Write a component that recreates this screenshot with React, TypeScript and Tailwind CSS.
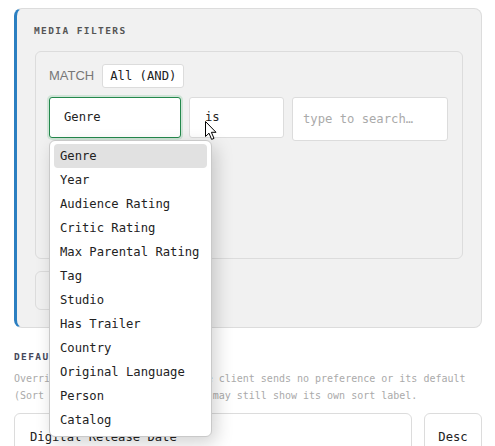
const fields = [
  'Genre',
  'Year',
  'Audience Rating',
  'Critic Rating',
  'Max Parental Rating',
  'Tag',
  'Studio',
  'Has Trailer',
  'Country',
  'Original Language',
  'Person',
  'Catalog',
];

function Cursor() {
  return (
    <svg
      className="pointer-events-none absolute left-[205px] top-[121px] z-30"
      width="13"
      height="20"
      viewBox="0 0 13 20"
    >
      <path
        d="M0.5 0.5 L0.5 15.5 L4 12.2 L6.6 18.4 L9 17.4 L6.4 11.3 L11 11.3 Z"
        fill="#fff"
        stroke="#000"
        strokeWidth="1"
        strokeLinejoin="round"
      />
    </svg>
  );
}

export default function App() {
  const selected = 'Genre';

  return (
    <div className="relative min-h-screen bg-white pl-[14px] pr-[13px] pt-[8px] font-['DejaVu_Sans_Mono',monospace] text-[#222]">
      {/* Media filters card */}
      <section className="rounded-lg border border-[#dcdcdc] border-l-[3px] border-l-[#2b7fc1] bg-[#f1f1f1] pb-[17px] pl-[18px] pr-[18px] pt-[16px]">
        <h2 className="-ml-[1px] text-[9.5px] font-bold leading-[12px] tracking-[1.4px] text-[#555]">MEDIA FILTERS</h2>

        <div className="mt-[14px] h-[208px] rounded-md border border-[#dcdcdc] bg-[#f1f1f1] px-[13px] pt-[12px]">
          <div className="flex items-center gap-[8px]">
            <span className="font-['Liberation_Sans',Arial,sans-serif] text-[13px] text-[#777]">MATCH</span>
            <div className="flex h-[24px] items-center rounded-[3px] border border-[#dcdcdc] bg-white px-[7px] text-[12.2px]">
              All (AND)
            </div>
          </div>

          <div className="mt-[9px] flex items-start gap-[8px]">
            <div className="relative">
              <div className="flex h-[41px] w-[132px] items-center rounded-[3px] border border-[#23884c] bg-white pl-[14px] text-[12.2px] shadow-[0_0_0_2px_rgba(60,170,100,0.18)]">
                Genre
              </div>

              {/* Open field menu */}
              <ul className="absolute left-0 top-[43px] z-20 w-[163px] rounded-md border border-[#c9c9c9] bg-white px-[4px] pb-[4px] pt-[3px] text-[12.2px] shadow-[4px_6px_18px_rgba(0,0,0,0.18)]">
                {fields.map((f) => (
                  <li
                    key={f}
                    className={
                      f === selected
                        ? 'h-[24px] rounded-[4px] bg-[#e1e1e1] pl-[6px] leading-[24px]'
                        : 'h-[24px] pl-[6px] leading-[24px]'
                    }
                  >
                    {f}
                  </li>
                ))}
              </ul>
            </div>

            <div className="flex h-[41px] w-[95px] items-center rounded-[3px] border border-[#dcdcdc] bg-white pl-[15px] text-[12.2px]">
              is
            </div>

            <div className="flex h-[44px] w-[156px] items-center rounded-[3px] border border-[#dcdcdc] bg-white pl-[10px] text-[12.2px] text-[#aaa]">
              type to search…
            </div>
          </div>
        </div>

        <button className="mt-[12px] flex h-[39px] w-[140px] items-center rounded-md border border-[#dcdcdc] bg-[#f1f1f1] pl-[14px] text-[12.2px] text-[#555]">
          + Add group
        </button>
      </section>

      {/* Default sort */}
      <h2 className="mt-[23px] text-[9.5px] font-bold leading-[12px] tracking-[1.4px] text-[#45485a]">DEFAULT SORT</h2>
      <p className="mt-[7px] text-[10px] leading-[17px] text-[#aaa]">
        Override sort order used when the client sends no preference or its default
        <br />
        (Sort direction is kept. Clients may still show its own sort label.
      </p>

      <div className="mt-[9px] flex gap-[12px]">
        <div className="flex h-[48px] flex-1 items-center rounded-md border border-[#dcdcdc] bg-white pl-[15px] text-[12.2px]">
          Digital Release Date
        </div>
        <div className="flex h-[48px] w-[58px] items-center justify-center rounded-md border border-[#dcdcdc] bg-white text-[12.2px]">
          Desc
        </div>
      </div>

      <Cursor />
    </div>
  );
}
